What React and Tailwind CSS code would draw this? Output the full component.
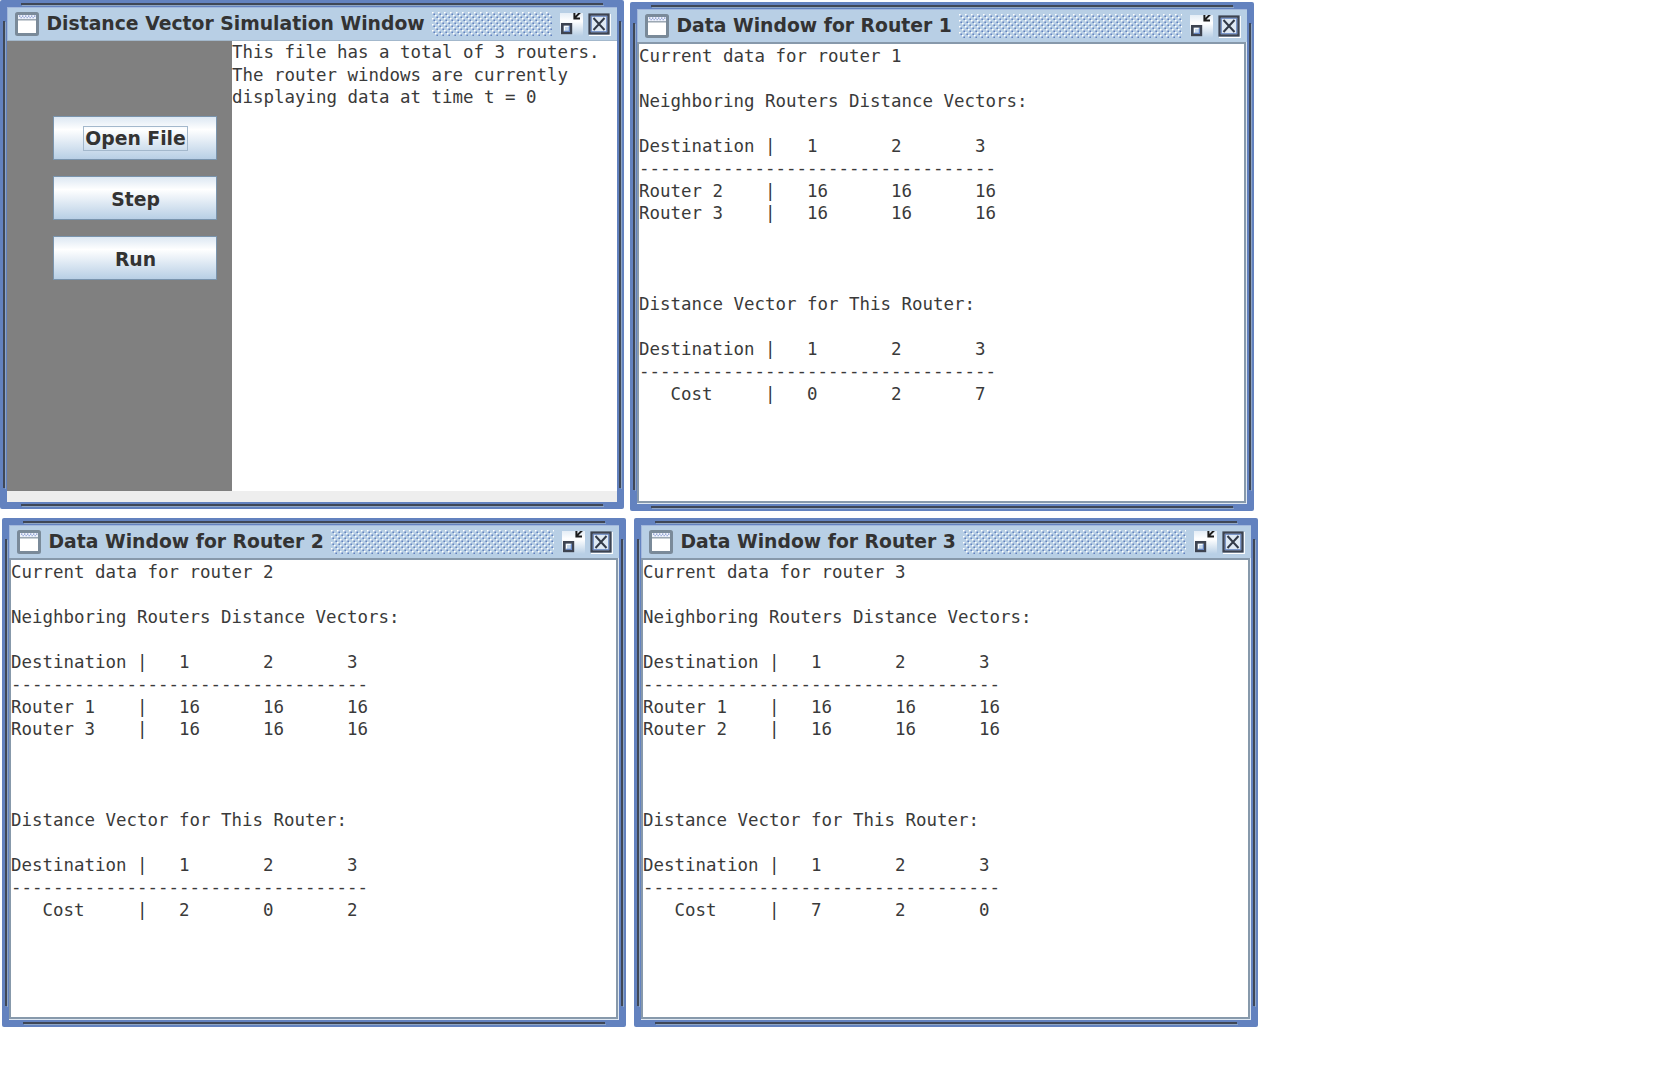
const MONO = "font-['DejaVu_Sans_Mono',monospace] text-[17.46px] leading-[22.55px] text-[#3a3a3a] whitespace-pre";

function FrameIcon() {
  return (
    <svg width="24" height="24" viewBox="0 0 24 24" className="shrink-0">
      <rect x="1.5" y="1.5" width="21" height="21" rx="1" fill="#fff" stroke="#7a8a99" strokeWidth="3" />
      <rect x="3" y="3" width="18" height="4" fill="#eef2fa" />
      <path d="M4 4.2h17" stroke="#7f92cc" strokeWidth="1.3" strokeDasharray="1.4 1.6" />
      <path d="M5.5 5.6h15" stroke="#98aadb" strokeWidth="1.3" strokeDasharray="1.4 1.6" />
      <path d="M3 7.8h18" stroke="#8b99a6" strokeWidth="1.3" />
    </svg>
  );
}

function MinimizeIcon() {
  return (
    <svg width="23" height="23" viewBox="0 0 23 23" className="shrink-0">
      <defs>
        <linearGradient id="min" x1="0" y1="0" x2="0" y2="1">
          <stop offset="0" stopColor="#e4edf6" />
          <stop offset="0.35" stopColor="#fff" />
          <stop offset="1" stopColor="#b8cfe5" />
        </linearGradient>
      </defs>
      <rect width="23" height="23" fill="url(#min)" />
      <rect x="2.3" y="11.3" width="8.6" height="8.6" fill="#c5d8ec" stroke="#3d4350" strokeWidth="2.6" />
      <path d="M4.2 18.4h5.2v-5.2" stroke="#6382bf" strokeWidth="1.2" fill="none" />
      <path d="M4.5 17.4v-4h4" stroke="#fff" strokeWidth="1" fill="none" />
      <path d="M20.5 -1L15 4.6M14.4 -0.4V5.4H20" stroke="#1c1c1c" strokeWidth="2" fill="none" />
    </svg>
  );
}

function CloseIcon() {
  return (
    <svg width="23" height="23" viewBox="0 0 23 23" className="shrink-0">
      <path d="M22.3 1v21.3H1" stroke="#fff" strokeWidth="1.2" fill="none" />
      <rect x="1.6" y="1.6" width="18.8" height="18.8" fill="#dfe9f4" stroke="#3d4350" strokeWidth="2.4" />
      <rect x="3.3" y="3.3" width="15.4" height="15.4" fill="none" stroke="#6382bf" strokeWidth="1" />
      <path d="M5.5 5l11 12M16.5 5l-11 12" stroke="#333a48" strokeWidth="2" />
    </svg>
  );
}

function Bumps({ id }) {
  return (
    <svg className="h-[24px] min-w-0 flex-1">
      <defs>
        <pattern id={id} width="6" height="6" patternUnits="userSpaceOnUse">
          <path d="M0 0h1.6v1.6H0zM3 3h1.6v1.6H3z" fill="#fff" />
          <path d="M1.4 1.4H3V3H1.4zM4.4 4.4H6V6H4.4z" fill="#6382bf" />
        </pattern>
      </defs>
      <rect width="100%" height="100%" fill={`url(#${id})`} />
    </svg>
  );
}

function Grooves() {
  return (
    <>
      <div className="absolute left-[21px] right-[21px] top-[3px] h-[2px] bg-[#3f4756]" />
      <div className="absolute left-[22px] right-[20px] top-[5px] h-px bg-[#8ea5c4]" />
      <div className="absolute bottom-[3px] left-[21px] right-[21px] h-[2px] bg-[#3f4756]" />
      <div className="absolute bottom-[2px] left-[22px] right-[20px] h-px bg-[#8ea5c4]" />
      <div className="absolute bottom-[21px] left-[3px] top-[21px] w-[2px] bg-[#3f4756]" />
      <div className="absolute bottom-[20px] left-[5px] top-[22px] w-px bg-[#8ea5c4]" />
      <div className="absolute bottom-[21px] right-[3px] top-[21px] w-[2px] bg-[#3f4756]" />
      <div className="absolute bottom-[20px] right-[2px] top-[22px] w-px bg-[#8ea5c4]" />
    </>
  );
}

function Frame({ title, id, className = "", children }) {
  return (
    <section className={`relative flex h-[509px] w-[624px] shrink-0 flex-col rounded-[2px] bg-[#6382bf] p-[7px] ${className}`}>
      <Grooves />
      <header className="flex h-[33px] shrink-0 items-center border-l border-t border-[#a3b8dc] bg-[#b8cfe5] pl-[7px] pr-[6px]">
        <FrameIcon />
        <h1 className="ml-[7.5px] mr-[7px] whitespace-pre font-['DejaVu_Sans',sans-serif] text-[18.8px] font-bold leading-none text-[#333333]">{title}</h1>
        <Bumps id={id} />
        <div className="ml-[8px] flex gap-[5px]">
          <MinimizeIcon />
          <CloseIcon />
        </div>
      </header>
      {children}
    </section>
  );
}

const RULE = "-".repeat(34);

function DataWindow({ router, neighbors, cost, className }) {
  const text = [
    `Current data for router ${router}`,
    "",
    "Neighboring Routers Distance Vectors:",
    "",
    "Destination |   1       2       3",
    RULE,
    ...neighbors.map((n) => `Router ${n}    |   16      16      16`),
    "",
    "",
    "",
    "Distance Vector for This Router:",
    "",
    "Destination |   1       2       3",
    RULE,
    `   Cost     |   ${cost.join("       ")}`,
  ].join("\n");
  return (
    <Frame title={`Data Window for Router ${router}`} id={`bumps${router}`} className={className}>
      <div className="flex-1 border-b border-r border-[#dfe8f2] bg-white">
        <div className="h-full border-2 border-[#8799ab] bg-white pt-[0.6px]">
          <pre className={MONO}>{text}</pre>
        </div>
      </div>
    </Frame>
  );
}

function Button({ children, focused }) {
  return (
    <button className="flex h-[44px] w-[164px] items-center justify-center border border-[#7a94ad] bg-linear-to-b from-[#dde8f3] via-white via-30% to-[#b8cfe5] pl-px pt-px font-['DejaVu_Sans',sans-serif] text-[18.8px] font-bold leading-none text-[#333333]">
      <span className={focused ? "border border-[#a3b8cc] px-px pb-px pt-[3px]" : "pt-[3px]"}>{children}</span>
    </button>
  );
}

export default function App() {
  return (
    <main className="h-[1066px] w-[1664px] overflow-hidden bg-white">
      <div className="flex gap-[6px]">
        <Frame title="Distance Vector Simulation Window" id="bumps0">
          <div className="flex flex-1 border-t border-[#a3b8cc] bg-white">
            <div className="flex w-[225px] shrink-0 flex-col gap-[16px] bg-[#808080] pl-[46px] pt-[75px]">
              <Button focused>Open File</Button>
              <Button>Step</Button>
              <Button>Run</Button>
            </div>
            <pre className={MONO}>{"This file has a total of 3 routers.\nThe router windows are currently\ndisplaying data at time t = 0"}</pre>
          </div>
          <div className="h-[11px] bg-[#eeeeee]" />
        </Frame>
        <DataWindow router={1} neighbors={[2, 3]} cost={[0, 2, 7]} className="mt-[2px]" />
      </div>
      <div className="ml-[2px] mt-[7px] flex gap-[8px]">
        <DataWindow router={2} neighbors={[1, 3]} cost={[2, 0, 2]} />
        <DataWindow router={3} neighbors={[1, 2]} cost={[7, 2, 0]} />
      </div>
    </main>
  );
}
